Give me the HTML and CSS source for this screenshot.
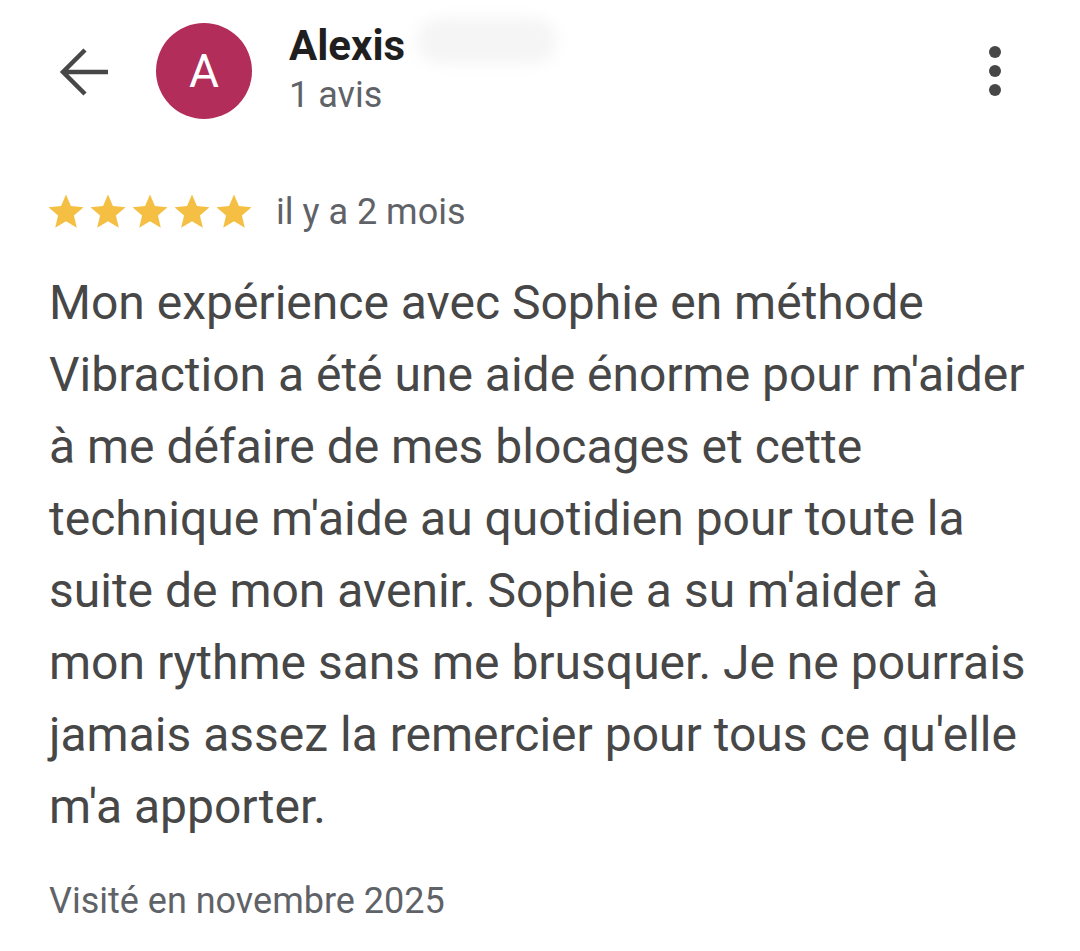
FILE: index.html
```html
<!DOCTYPE html>
<html lang="fr">
<head>
<meta charset="utf-8">
<link rel="stylesheet" href="styles.css">
</head>
<body>
<div class="page">
  <header class="top">
    <div class="back">
      <svg width="56" height="56" viewBox="0 0 56 56"><path d="M6 25H52M29 3L7 25L29 47" fill="none" stroke="#474747" stroke-width="4.5"/></svg>
    </div>
    <div class="avatar">A</div>
    <div class="who">
      <div class="name-row"><span class="name">Alexis</span><span class="blur"></span></div>
      <div class="count">1 avis</div>
    </div>
    <div class="more">
      <span class="dot"></span><span class="dot"></span><span class="dot"></span>
    </div>
  </header>
  <div class="meta">
    <div class="stars">
      <svg viewBox="0 0 24 24" class="star"><path d="M12 17.27L18.18 21l-1.64-7.03L22 9.24l-7.19-.61L12 2 9.19 8.63 2 9.24l5.46 4.73L5.82 21z"/></svg>
      <svg viewBox="0 0 24 24" class="star"><path d="M12 17.27L18.18 21l-1.64-7.03L22 9.24l-7.19-.61L12 2 9.19 8.63 2 9.24l5.46 4.73L5.82 21z"/></svg>
      <svg viewBox="0 0 24 24" class="star"><path d="M12 17.27L18.18 21l-1.64-7.03L22 9.24l-7.19-.61L12 2 9.19 8.63 2 9.24l5.46 4.73L5.82 21z"/></svg>
      <svg viewBox="0 0 24 24" class="star"><path d="M12 17.27L18.18 21l-1.64-7.03L22 9.24l-7.19-.61L12 2 9.19 8.63 2 9.24l5.46 4.73L5.82 21z"/></svg>
      <svg viewBox="0 0 24 24" class="star"><path d="M12 17.27L18.18 21l-1.64-7.03L22 9.24l-7.19-.61L12 2 9.19 8.63 2 9.24l5.46 4.73L5.82 21z"/></svg>
    </div>
    <span class="ago">il y a 2 mois</span>
  </div>
  <p class="review">Mon expérience avec Sophie en méthode Vibraction a été une aide énorme pour m'aider à me défaire de mes blocages et cette technique m'aide au quotidien pour toute la suite de mon avenir. Sophie a su m'aider à mon rythme sans me brusquer. Je ne pourrais jamais assez la remercier pour tous ce qu'elle m'a apporter.</p>
  <div class="visit">Visité en novembre 2025</div>
</div>
</body>
</html>
```

FILE: styles.css
```css
html, body {
  margin: 0;
  padding: 0;
  background: #fff;
}
body {
  font-family: Roboto, "Noto Sans", sans-serif;
  width: 1080px;
  height: 951px;
  overflow: hidden;
}
.page {
  padding: 0 0 0 49px;
}
.top {
  display: flex;
  align-items: flex-start;
  height: 150px;
}
.back {
  width: 56px;
  height: 56px;
  margin-top: 47px;
  margin-left: 7px;
}
.back svg { display: block; }
.avatar {
  width: 96px;
  height: 96px;
  border-radius: 50%;
  background: #b22d5a;
  color: #fff;
  font-size: 46px;
  display: flex;
  align-items: center;
  justify-content: center;
  margin-left: 44px;
  margin-top: 23px;
}
.who {
  margin-left: 37px;
  margin-top: 21px;
}
.name-row {
  display: flex;
  align-items: center;
  height: 50px;
}
.name {
  font-size: 42px;
  line-height: 50px;
  font-weight: 700;
  color: #1f1f1f;
}
.blur {
  display: inline-block;
  width: 140px;
  height: 46px;
  margin-left: 12px;
  margin-top: -10px;
  background: #f5f5f5;
  border-radius: 23px;
  filter: blur(7px);
}
.count {
  font-size: 36px;
  line-height: 44px;
  color: #5f6368;
  margin-top: 2px;
}
.more {
  margin-left: auto;
  margin-right: 79px;
  margin-top: 46px;
  display: flex;
  flex-direction: column;
  gap: 7px;
}
.dot {
  width: 12px;
  height: 12px;
  border-radius: 50%;
  background: #474747;
}
.meta {
  display: flex;
  align-items: center;
  margin-top: 41px;
  height: 42px;
}
.stars {
  display: flex;
  margin-left: -4px;
}
.star {
  width: 42px;
  height: 42px;
  fill: #f4bf42;
}
.ago {
  font-size: 36px;
  line-height: 42px;
  color: #5f6368;
  margin-left: 21px;
}
.review {
  margin: 34px 0 0 0;
  width: 982px;
  font-size: 48px;
  line-height: 72px;
  color: #474747;
}
.visit {
  margin-top: 36px;
  font-size: 36px;
  line-height: 44px;
  color: #5f6368;
}
```
